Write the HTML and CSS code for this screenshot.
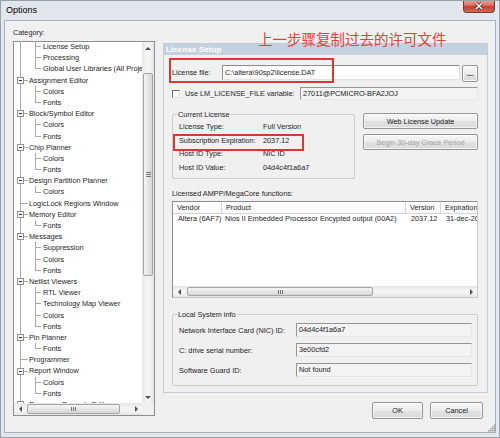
FILE: index.html
```html
<!DOCTYPE html>
<html>
<head>
<meta charset="utf-8">
<title>Options</title>
<link rel="stylesheet" href="styles.css">
</head>
<body>
<div class="window">
  <div class="titlebar">
    <span class="title">Options</span>
    <span class="close"><svg width="12" height="8" viewBox="0 0 12 8"><path d="M3 1 L9 7 M9 1 L3 7" stroke="#5a1d16" stroke-width="3"/><path d="M3 1 L9 7 M9 1 L3 7" stroke="#fff" stroke-width="1.6"/></svg></span>
  </div>
  <div class="client">
    <div class="left">
      <div class="cat-label">Category:</div>
      <div class="treebox">
        <div class="tree">
          <div class="trow c">License Setup</div>
          <div class="trow c">Processing</div>
          <div class="trow c last">Global User Libraries (All Projects)</div>
          <div class="trow r"><span class="box"></span>Assignment Editor</div>
          <div class="trow c">Colors</div>
          <div class="trow c last">Fonts</div>
          <div class="trow r"><span class="box"></span>Block/Symbol Editor</div>
          <div class="trow c">Colors</div>
          <div class="trow c last">Fonts</div>
          <div class="trow r"><span class="box"></span>Chip Planner</div>
          <div class="trow c">Colors</div>
          <div class="trow c last">Fonts</div>
          <div class="trow r"><span class="box"></span>Design Partition Planner</div>
          <div class="trow c last">Colors</div>
          <div class="trow r leaf"><span class="box"></span>LogicLock Regions Window</div>
          <div class="trow r"><span class="box"></span>Memory Editor</div>
          <div class="trow c last">Fonts</div>
          <div class="trow r"><span class="box"></span>Messages</div>
          <div class="trow c">Suppression</div>
          <div class="trow c">Colors</div>
          <div class="trow c last">Fonts</div>
          <div class="trow r"><span class="box"></span>Netlist Viewers</div>
          <div class="trow c">RTL Viewer</div>
          <div class="trow c">Technology Map Viewer</div>
          <div class="trow c">Colors</div>
          <div class="trow c last">Fonts</div>
          <div class="trow r"><span class="box"></span>Pin Planner</div>
          <div class="trow c last">Fonts</div>
          <div class="trow r leaf"><span class="box"></span>Programmer</div>
          <div class="trow r"><span class="box"></span>Report Window</div>
          <div class="trow c">Colors</div>
          <div class="trow c last">Fonts</div>
          <div class="trow r"><span class="box"></span>Resource Property Editor</div>
        </div>
        <div class="vscroll">
          <span class="sb-btn up"></span>
          <span class="vthumb tree-vthumb"><span class="vgrip"></span></span>
          <span class="sb-fill"></span>
          <span class="sb-btn down"></span>
        </div>
        <div class="hscroll">
          <span class="sb-btn lt"></span>
          <span class="hthumb tree-hthumb"><span class="hgrip"></span></span>
          <span class="sb-fill"></span>
          <span class="sb-btn rt"></span>
        </div>
        <div class="corner"></div>
      </div>
    </div>

    <div class="right">
      <div class="panel">
        <div class="panel-head">License Setup</div>
        <div class="panel-body">
          <div class="row-file">
            <span class="lbl-file">License file:</span>
            <div class="field file-field">C:\altera\90sp2\license.DAT</div>
            <button class="btn browse">...</button>
          </div>
          <div class="row-var">
            <span class="check"></span>
            <span class="lbl-var">Use LM_LICENSE_FILE variable:</span>
            <div class="field ro var-field">27011@PCMICRO-BFA2JOJ</div>
          </div>
          <div class="row-current">
            <div class="group current">
              <div class="group-title">Current License</div>
              <div class="kv">
                <span>License Type:</span><span>Full Version</span>
                <span>Subscription Expiration:</span><span>2037.12</span>
                <span>Host ID Type:</span><span>NIC ID</span>
                <span>Host ID Value:</span><span>04d4c4f1a6a7</span>
              </div>
            </div>
            <div class="side-buttons">
              <button class="btn wide">Web License Update</button>
              <button class="btn wide disabled">Begin 30-day Grace Period</button>
            </div>
          </div>
          <div class="ampp-label">Licensed AMPP/MegaCore functions:</div>
          <div class="listview">
            <div class="lv-row lv-head">
              <span>Vendor</span><span>Product</span><span>Version</span><span>Expiration</span>
            </div>
            <div class="lv-row lv-item">
              <span>Altera (6AF7)</span><span>Nios II Embedded Processor Encypted output (00A2)</span><span>2037.12</span><span>31-dec-2037</span>
            </div>
            <div class="lv-space"></div>
            <div class="hscroll lv-scroll">
              <span class="sb-btn lt"></span>
              <span class="hthumb lv-hthumb"><span class="hgrip"></span></span>
              <span class="sb-fill"></span>
              <span class="sb-btn rt"></span>
            </div>
          </div>
          <div class="group local">
            <div class="group-title">Local System info</div>
            <div class="local-rows">
              <div class="local-row"><span class="lbl-local">Network Interface Card (NIC) ID:</span><div class="field ro local-field">04d4c4f1a6a7</div></div>
              <div class="local-row"><span class="lbl-local">C: drive serial number:</span><div class="field ro local-field">3e00cfd2</div></div>
              <div class="local-row"><span class="lbl-local">Software Guard ID:</span><div class="field ro local-field">Not found</div></div>
            </div>
          </div>
        </div>
      </div>
      <div class="dlg-buttons">
        <button class="btn ok">OK</button>
        <button class="btn cancel">Cancel</button>
      </div>
    </div>
  </div>

  <div class="annot-text">上一步骤复制过去的许可文件</div>
  <div class="annot-box box-file"></div>
  <div class="annot-box box-exp"></div>
  <svg class="grip" width="10" height="10" viewBox="0 0 10 10">
    <g fill="#9a9a9a">
      <rect x="8" y="2" width="1.5" height="1.5"/>
      <rect x="6" y="4" width="1.5" height="1.5"/><rect x="8" y="4" width="1.5" height="1.5"/>
      <rect x="4" y="6" width="1.5" height="1.5"/><rect x="6" y="6" width="1.5" height="1.5"/><rect x="8" y="6" width="1.5" height="1.5"/>
      <rect x="2" y="8" width="1.5" height="1.5"/><rect x="4" y="8" width="1.5" height="1.5"/><rect x="6" y="8" width="1.5" height="1.5"/><rect x="8" y="8" width="1.5" height="1.5"/>
    </g>
  </svg>
</div>
</body>
</html>
```

FILE: styles.css
```css
body {
  margin: 0;
  background: #ffffff;
}

.window {
  --ln: #a8a8a8;
  position: relative;
  width: 500px;
  height: 438px;
  box-sizing: border-box;
  border: 1px solid #97a2ad;
  background: #e2e7ed;
  display: flex;
  flex-direction: column;
  padding: 0 3px 4px 3px;
  font-family: "Liberation Sans", Arial, sans-serif;
  font-size: 7.3px;
  color: #1e1e1e;
  overflow: hidden;
}

/* title bar */
.titlebar {
  height: 19px;
  flex: none;
  display: flex;
  justify-content: space-between;
  align-items: flex-start;
}
.title {
  font-size: 9px;
  line-height: 19px;
  padding-left: 2px;
  color: #000;
}
.close {
  width: 32px;
  height: 13px;
  margin-top: -1px;
  margin-right: 1px;
  box-sizing: border-box;
  border: 1px solid #7b3a31;
  border-top: none;
  border-radius: 0 0 4px 4px;
  background: linear-gradient(#e8a898, #d8705e 45%, #c2402f 55%, #d06a52);
  display: flex;
  align-items: center;
  justify-content: center;
}

/* client area */
.client {
  flex: 1;
  min-height: 0;
  border: 1px solid #a9b3bd;
  background: #f0f0f0;
  display: flex;
}

.left {
  flex: none;
  width: 142px;
  padding: 7px 0 0 8px;
}
.cat-label {
  height: 10px;
  line-height: 10px;
  margin-bottom: 3px;
}

.treebox {
  width: 142px;
  height: 375px;
  box-sizing: border-box;
  border: 1px solid #8a9099;
  background: #fff;
  display: grid;
  grid-template-columns: 1fr 12px;
  grid-template-rows: 1fr 12px;
}
.tree {
  overflow: hidden;
  min-width: 0;
  padding-top: 0;
  margin-top: -1px;
}
.trow {
  height: 11.2px;
  line-height: 11.2px;
  white-space: nowrap;
  display: flex;
  align-items: center;
  background-repeat: no-repeat;
}
.trow.c {
  padding-left: 29px;
  background-image: linear-gradient(var(--ln), var(--ln)), linear-gradient(var(--ln), var(--ln)), linear-gradient(var(--ln), var(--ln));
  background-position: 6px 0, 21px 0, 21px 50%;
  background-size: 1px 100%, 1px 100%, 6px 1px;
}
.trow.c.last {
  background-size: 1px 100%, 1px 50%, 6px 1px;
}
.trow.r {
  padding-left: 3px;
  background-image: linear-gradient(var(--ln), var(--ln)), linear-gradient(var(--ln), var(--ln));
  background-position: 6px 0, 6px 50%;
  background-size: 1px 100%, 8px 1px;
}
.box {
  flex: none;
  width: 7px;
  height: 7px;
  box-sizing: border-box;
  margin-right: 5px;
  border: 1px solid #8f8f8f;
  background: linear-gradient(#2a2a2a, #2a2a2a) center / 3px 1px no-repeat, #fff;
}
.trow.leaf .box {
  visibility: hidden;
}

/* scrollbars */
.vscroll {
  display: flex;
  flex-direction: column;
  background: linear-gradient(90deg, #e6e6e6, #f4f4f4 40%, #f4f4f4 60%, #e6e6e6);
}
.hscroll {
  display: flex;
  background: linear-gradient(#e6e6e6, #f4f4f4 40%, #f4f4f4 60%, #e6e6e6);
}
.corner {
  background: #f0f0f0;
}
.sb-btn {
  flex: none;
  width: 12px;
  height: 12px;
  display: flex;
  align-items: center;
  justify-content: center;
}
.sb-btn::after {
  content: "";
  width: 0;
  height: 0;
  border: 3px solid transparent;
}
.sb-btn.up::after { border-bottom-color: #505050; border-top-width: 0; }
.sb-btn.down::after { border-top-color: #505050; border-bottom-width: 0; }
.sb-btn.lt::after { border-right-color: #505050; border-left-width: 0; }
.sb-btn.rt::after { border-left-color: #505050; border-right-width: 0; }
.sb-fill {
  flex: 1;
}
.vthumb {
  flex: none;
  box-sizing: border-box;
  margin: 0 1px;
  border: 1px solid #a4a4a4;
  border-radius: 2px;
  background: linear-gradient(90deg, #f6f6f6, #e6e6e6 50%, #d6d6d6);
  display: flex;
  align-items: center;
  justify-content: center;
}
.tree-vthumb {
  margin-top: 19px;
  height: 203px;
}
.vgrip {
  width: 5px;
  height: 5px;
  background: repeating-linear-gradient(#777 0 1px, transparent 1px 2px);
}
.hthumb {
  flex: none;
  box-sizing: border-box;
  margin: 1px 0;
  border: 1px solid #a4a4a4;
  border-radius: 2px;
  background: linear-gradient(#f6f6f6, #e6e6e6 50%, #d6d6d6);
  display: flex;
  align-items: center;
  justify-content: center;
}
.tree-hthumb {
  margin-left: 1px;
  width: 93px;
}
.hgrip {
  width: 5px;
  height: 4px;
  background: repeating-linear-gradient(90deg, #777 0 1px, transparent 1px 2px);
}

/* right column */
.right {
  flex: none;
  width: 325px;
  margin-left: 8px;
  padding-top: 22px;
  display: flex;
  flex-direction: column;
}
.panel {
  height: 350px;
  box-sizing: border-box;
  border: 1px solid #c3ccd6;
  display: flex;
  flex-direction: column;
}
.panel-head {
  height: 11px;
  line-height: 11px;
  flex: none;
  background: #c4d2df;
  color: #fff;
  font-weight: bold;
  font-size: 8px;
  padding-left: 2px;
  letter-spacing: 0.1px;
}
.panel-body {
  padding: 0 9px 0 8px;
  display: flex;
  flex-direction: column;
}

.field {
  box-sizing: border-box;
  border: 1px solid;
  border-color: #8c8c8c #e2e2e2 #e2e2e2 #8c8c8c;
  background: #fff;
  padding-left: 2px;
  white-space: nowrap;
  overflow: hidden;
  color: #1a1a1a;
}
.field.ro {
  background: #f3f3f3;
  border-color: #969696 #e6e6e6 #e6e6e6 #969696;
}

.row-file {
  margin-top: 10px;
  height: 17px;
  display: flex;
  align-items: flex-start;
}
.lbl-file {
  flex: none;
  width: 50px;
  line-height: 15px;
}
.file-field {
  flex: none;
  width: 238px;
  height: 15px;
  line-height: 13px;
}
.btn {
  font: inherit;
  color: #1a1a1a;
  padding: 0;
  height: 17px;
  box-sizing: border-box;
  border: 1px solid #959595;
  border-radius: 2px;
  background: linear-gradient(#f7f7f7, #ececec 50%, #e2e2e2 51%, #dadada);
  box-shadow: inset 0 0 0 1px rgba(255, 255, 255, 0.7);
}
.browse {
  width: 16px;
  margin-left: 2px;
  line-height: 12px;
  font-weight: bold;
}
.row-var {
  margin-top: 5px;
  height: 13px;
  display: flex;
  align-items: center;
}
.check {
  flex: none;
  width: 8px;
  height: 8px;
  box-sizing: border-box;
  margin-right: 5px;
  border: 1px solid;
  border-color: #6c6c6c #dedede #dedede #6c6c6c;
  background: #fafafa;
}
.lbl-var {
  flex: none;
  width: 115px;
}
.var-field {
  flex: 1;
  height: 13px;
  line-height: 11px;
}

.row-current {
  margin-top: 13px;
  display: flex;
  align-items: flex-start;
}
.group {
  box-sizing: border-box;
  border: 1px solid #cbcbcb;
  border-radius: 2px;
}
.group-title {
  width: fit-content;
  margin: -5px 0 0 4px;
  padding: 0 1px;
  line-height: 9px;
  height: 9px;
  background: #f0f0f0;
}
.current {
  flex: none;
  width: 183px;
  height: 65px;
  margin-top: 1px;
}
.kv {
  margin-top: 1px;
  padding-left: 6px;
  display: grid;
  grid-template-columns: 84px 1fr;
  grid-auto-rows: 13.7px;
  line-height: 13.7px;
}
.side-buttons {
  flex: none;
  width: 115px;
  margin-left: 8px;
  display: flex;
  flex-direction: column;
  gap: 5px;
}
.btn.wide {
  height: 16px;
  width: 100%;
}
.btn.disabled {
  color: #a3a3a3;
}

.ampp-label {
  margin-top: 10px;
  height: 10px;
  line-height: 10px;
}
.listview {
  margin-top: 2px;
  height: 97px;
  box-sizing: border-box;
  border: 1px solid;
  border-color: #8e8e8e #c8c8c8 #c8c8c8 #8e8e8e;
  background: #fff;
  display: flex;
  flex-direction: column;
  overflow: hidden;
}
.lv-row {
  display: grid;
  grid-template-columns: 49px 184px 35px 1fr;
  white-space: nowrap;
}
.lv-row span {
  overflow: hidden;
  padding-left: 4px;
}
.lv-head {
  height: 12px;
  line-height: 11px;
  border-bottom: 1px solid #d5d5d5;
  box-sizing: border-box;
  background: linear-gradient(#ffffff, #f7f8fa);
}
.lv-head span {
  border-right: 1px solid #d5d5d5;
}
.lv-head span:last-child {
  border-right: none;
}
.lv-item {
  line-height: 10px;
  height: 10px;
}
.lv-item span {
  padding-left: 5px;
}
.lv-item span:nth-child(2) {
  padding-left: 3px;
}
.lv-space {
  flex: 1;
}
.lv-scroll {
  height: 11px;
  flex: none;
}
.lv-scroll .sb-btn {
  height: 11px;
}
.lv-hthumb {
  margin-left: 2px;
  width: 186px;
}

.local {
  margin-top: 16px;
  height: 72px;
  padding: 0 5px 0 6px;
}
.local .group-title {
  margin-left: -2px;
}
.local-rows {
  margin-top: 4px;
  display: flex;
  flex-direction: column;
  gap: 6px;
}
.local-row {
  display: flex;
  align-items: center;
  height: 14px;
}
.lbl-local {
  flex: none;
  width: 117px;
}
.local-field {
  width: 176px;
  height: 14px;
  line-height: 11px;
}

.dlg-buttons {
  margin-top: 9px;
  margin-right: 5px;
  display: flex;
  justify-content: flex-end;
  gap: 7px;
}
.btn.ok {
  width: 51px;
}
.btn.cancel {
  width: 53px;
}

/* annotations laid over the dialog */
.annot-text {
  position: absolute;
  left: 257px;
  top: 31px;
  font-family: "Noto Sans CJK SC", sans-serif;
  font-size: 14.5px;
  line-height: 1;
  color: #e5413b;
  white-space: nowrap;
}
.annot-box {
  position: absolute;
  box-sizing: border-box;
  border: 2px solid #d93636;
}
.box-file {
  left: 168px;
  top: 57px;
  width: 165px;
  height: 25px;
}
.box-exp {
  left: 172px;
  top: 133px;
  width: 131px;
  height: 17px;
}
.grip {
  position: absolute;
  right: 3px;
  bottom: 5px;
}
```
